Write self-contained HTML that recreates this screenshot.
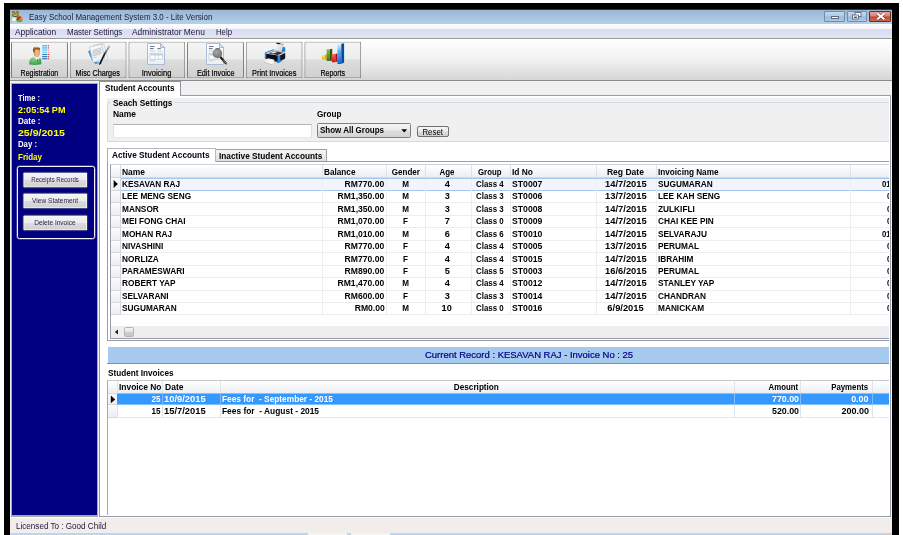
<!DOCTYPE html>
<html><head><meta charset="utf-8"><title>Easy School Management System 3.0 - Lite Version</title>
<style>
html,body{margin:0;padding:0;background:#fff;}
body{width:903px;height:535px;position:relative;overflow:hidden;font-family:"Liberation Sans",sans-serif;}
div,span,svg{position:absolute;display:block;}
span{white-space:nowrap;}
</style></head><body><div id="app" style="left:0;top:0;width:903px;height:535px;will-change:transform">
<div style="left:4px;top:3px;width:895px;height:532px;background:#000;"></div>
<div style="left:10px;top:10px;width:882px;height:525px;background:#f0f0f0;"></div>
<div style="left:10px;top:9px;width:882px;height:15px;background:linear-gradient(#98b4d4,#9fbad9 20%,#b5d0e9);"></div>
<div style="left:10px;top:9px;width:882px;height:1px;background:#2e3640;"></div>
<div style="left:10px;top:24px;width:882px;height:14px;background:linear-gradient(#ffffff,#f3f5fb 35%,#d7dcef 40%,#e2e7f5);"></div>
<div style="left:10px;top:38px;width:882px;height:1px;background:#9a9a9a;"></div>
<div style="left:10px;top:39px;width:882px;height:41px;background:linear-gradient(#ffffff,#f2f2f2 50%,#d6d6d6);"></div>
<div style="left:10px;top:80px;width:882px;height:1px;background:#8c8c8c;"></div>
<svg style="left:11px;top:10px" width="13" height="13" viewBox="11 10 13 13">
<path d="M11.6 16.2 Q11.4 13.6 13.4 13.4 L17.6 13.4 Q19.4 13.6 19.2 16.2 L17.4 17 L13.6 17Z" fill="#5a9e2a"/>
<circle cx="13.5" cy="12.6" r="1.7" fill="#b8844a"/><circle cx="17.4" cy="12.6" r="1.7" fill="#b8844a"/>
<path d="M11.9 12.2 Q13.5 10.2 15.1 12.2Z" fill="#7a4a1a"/><path d="M15.8 12.2 Q17.4 10.2 19 12.2Z" fill="#7a4a1a"/>
<circle cx="15.4" cy="14.6" r="1.6" fill="#d8a878"/><path d="M13.9 14.2 Q15.4 12.4 16.9 14.2Z" fill="#7a4a1a"/>
<path d="M13.8 17 Q15.4 15.6 17 17Z" fill="#2c2c2c"/>
<rect x="12" y="17.2" width="4" height="4.2" fill="#f6f4ee" stroke="#b0aca0" stroke-width=".4"/>
<circle cx="19.5" cy="19.2" r="2.9" fill="#e81c10"/>
<path d="M19.5 19.2 L21.2 16.9 A2.9 2.9 0 0 1 22.3 20Z" fill="#f0a020"/>
<path d="M19.5 19.2 L22.3 20 A2.9 2.9 0 0 1 17 20.7Z" fill="#58c020"/>
</svg>
<span style="left:28.70px;top:10px;width:202.38px;line-height:14px;font-size:8.6px;font-weight:normal;color:#1c1c3a;text-align:left;transform:scaleX(0.925);transform-origin:left center;">Easy School Management System 3.0 - Lite Version</span>
<span style="left:15.20px;top:25px;width:46.07px;line-height:14px;font-size:8.6px;font-weight:normal;color:#28143c;text-align:left;transform:scaleX(0.979);transform-origin:left center;">Application</span>
<span style="left:67.00px;top:25px;width:63.75px;line-height:14px;font-size:8.6px;font-weight:normal;color:#28143c;text-align:left;transform:scaleX(0.926);transform-origin:left center;">Master Settings</span>
<span style="left:132.40px;top:25px;width:78.56px;line-height:14px;font-size:8.6px;font-weight:normal;color:#28143c;text-align:left;transform:scaleX(0.978);transform-origin:left center;">Administrator Menu</span>
<span style="left:216.00px;top:25px;width:21.69px;line-height:14px;font-size:8.6px;font-weight:normal;color:#28143c;text-align:left;transform:scaleX(0.905);transform-origin:left center;">Help</span>
<div style="left:824px;top:11px;width:21px;height:11px;background:linear-gradient(#c4d6ea,#b4cbe4 48%,#9db9d8 52%,#b0c8e2);border:1px solid #6f8db0;border-radius:1px;box-sizing:border-box"></div>
<div style="left:847px;top:11px;width:20px;height:11px;background:linear-gradient(#c4d6ea,#b4cbe4 48%,#9db9d8 52%,#b0c8e2);border:1px solid #6f8db0;border-radius:1px;box-sizing:border-box"></div>
<div style="left:869px;top:11px;width:22px;height:11px;background:linear-gradient(#e9a99a,#d9806c 48%,#c4452b 52%,#cf6a50);border:1px solid #6a2a2a;border-radius:1px;box-sizing:border-box"></div>
<div style="left:831px;top:16px;width:8px;height:3px;background:#fff;border:1px solid #5a6a80;box-sizing:border-box"></div>
<svg style="left:851px;top:12px" width="12" height="8" viewBox="0 0 12 8"><rect x="4" y=".6" width="6" height="4" fill="#fff" stroke="#4a5870" stroke-width=".8"/><rect x="1.5" y="3" width="6" height="4" fill="#fff" stroke="#4a5870" stroke-width=".8"/><rect x="3" y="4.6" width="3" height="1.4" fill="#4a5870"/></svg>
<svg style="left:875px;top:12px" width="12" height="9" viewBox="0 0 12 9"><path d="M2.2 1.4 L9.4 7.2 M9.4 1.4 L2.2 7.2" stroke="#6a3030" stroke-width="3.2"/><path d="M2.2 1.4 L9.4 7.2 M9.4 1.4 L2.2 7.2" stroke="#fff" stroke-width="2.1"/></svg>
<div style="left:11px;top:41px;width:57px;height:37px;transform:translate(0.00px,.4px);box-sizing:border-box;border:1px solid #7c7c7c;border-top-color:#a4a4a4;border-radius:2px;background:linear-gradient(#f5f5f5,#ececec 47%,#dddddd 50%,#d0d0d0)"></div>
<span style="left:14.99px;top:67px;width:48.82px;line-height:13px;font-size:8.4px;font-weight:normal;color:#000;text-align:center;transform:scaleX(0.843);transform-origin:center center;-webkit-text-stroke:.2px #000;">Registration</span>
<div style="left:69px;top:41px;width:57px;height:37px;transform:translate(0.66px,.4px);box-sizing:border-box;border:1px solid #7c7c7c;border-top-color:#a4a4a4;border-radius:2px;background:linear-gradient(#f5f5f5,#ececec 47%,#dddddd 50%,#d0d0d0)"></div>
<span style="left:70.39px;top:67px;width:55.35px;line-height:13px;font-size:8.4px;font-weight:normal;color:#000;text-align:center;transform:scaleX(0.865);transform-origin:center center;-webkit-text-stroke:.2px #000;">Misc Charges</span>
<div style="left:128px;top:41px;width:57px;height:37px;transform:translate(0.32px,.4px);box-sizing:border-box;border:1px solid #7c7c7c;border-top-color:#a4a4a4;border-radius:2px;background:linear-gradient(#f5f5f5,#ececec 47%,#dddddd 50%,#d0d0d0)"></div>
<span style="left:138.14px;top:67px;width:37.15px;line-height:13px;font-size:8.4px;font-weight:normal;color:#000;text-align:center;transform:scaleX(0.899);transform-origin:center center;-webkit-text-stroke:.2px #000;">Invoicing</span>
<div style="left:186px;top:41px;width:57px;height:37px;transform:translate(0.98px,.4px);box-sizing:border-box;border:1px solid #7c7c7c;border-top-color:#a4a4a4;border-radius:2px;background:linear-gradient(#f5f5f5,#ececec 47%,#dddddd 50%,#d0d0d0)"></div>
<span style="left:191.67px;top:67px;width:47.42px;line-height:13px;font-size:8.4px;font-weight:normal;color:#000;text-align:center;transform:scaleX(0.868);transform-origin:center center;-webkit-text-stroke:.2px #000;">Edit Invoice</span>
<div style="left:245px;top:41px;width:57px;height:37px;transform:translate(0.64px,.4px);box-sizing:border-box;border:1px solid #7c7c7c;border-top-color:#a4a4a4;border-radius:2px;background:linear-gradient(#f5f5f5,#ececec 47%,#dddddd 50%,#d0d0d0)"></div>
<span style="left:246.83px;top:67px;width:54.42px;line-height:13px;font-size:8.4px;font-weight:normal;color:#000;text-align:center;transform:scaleX(0.883);transform-origin:center center;-webkit-text-stroke:.2px #000;">Print Invoices</span>
<div style="left:304px;top:41px;width:57px;height:37px;transform:translate(0.30px,.4px);box-sizing:border-box;border:1px solid #7c7c7c;border-top-color:#a4a4a4;border-radius:2px;background:linear-gradient(#f5f5f5,#ececec 47%,#dddddd 50%,#d0d0d0)"></div>
<span style="left:315.99px;top:67px;width:33.41px;line-height:13px;font-size:8.4px;font-weight:normal;color:#000;text-align:center;transform:scaleX(0.833);transform-origin:center center;-webkit-text-stroke:.2px #000;">Reports</span>
<svg style="left:28px;top:43px" width="24" height="23" viewBox="28 43 24 23"><defs><linearGradient id="rgp" x1="0" y1="0" x2="0" y2="1"><stop offset="0" stop-color="#f4faff"/><stop offset="1" stop-color="#d8e9f8"/></linearGradient>
<radialGradient id="rgb" cx=".4" cy=".3" r=".8"><stop offset="0" stop-color="#7fd08a"/><stop offset="1" stop-color="#2f9a48"/></radialGradient>
<linearGradient id="rgs" x1="0" y1="0" x2="1" y2="0"><stop offset="0" stop-color="#c98a4e"/><stop offset=".5" stop-color="#f0bc8a"/><stop offset="1" stop-color="#d79a62"/></linearGradient></defs><rect x="40" y="43.8" width="10.2" height="17.6" fill="url(#rgp)"/><rect x="42.2" y="45.20" width="5.2" height="1.1" fill="#19b4ec"/><rect x="48" y="45.20" width="1.1" height="1.1" fill="#e0303a" opacity="1"/><rect x="42.2" y="47.38" width="5.2" height="1.1" fill="#22b0ea"/><rect x="48" y="47.38" width="1.1" height="1.1" fill="#e0303a" opacity="1"/><rect x="42.2" y="49.56" width="5.2" height="1.1" fill="#5abde9"/><rect x="48" y="49.56" width="1.1" height="1.1" fill="#e0303a" opacity="0.45"/><rect x="42.2" y="51.74" width="5.2" height="1.1" fill="#8cc6ea"/><rect x="48" y="51.74" width="1.1" height="1.1" fill="#e0303a" opacity="0.45"/><rect x="42.2" y="53.92" width="5.2" height="1.1" fill="#2d86bd"/><rect x="48" y="53.92" width="1.1" height="1.1" fill="#e0303a" opacity="1"/><rect x="42.2" y="56.10" width="5.2" height="1.1" fill="#2c6ea8"/><rect x="48" y="56.10" width="1.1" height="1.1" fill="#e0303a" opacity="1"/><rect x="42.2" y="58.28" width="5.2" height="1.1" fill="#365f9a"/><rect x="48" y="58.28" width="1.1" height="1.1" fill="#e0303a" opacity="1"/><path d="M29.2 64.6 Q28.8 58.6 33 57.6 L37.6 56.8 Q41.6 57.6 41.4 62 L41.2 64.2 Q35 65.6 29.2 64.6Z" fill="url(#rgb)"/><path d="M34 57.2 L37.4 60.8 L40 57.4 L38 56.4 L35.6 56.4Z" fill="#f4f4fa"/><path d="M36.8 59 L37.9 59 L37.7 61.4 L37 61.4Z" fill="#d63a28"/><path d="M33.4 50 Q33.2 47.2 36.2 47 Q40 46.8 40 50.4 L39.8 54 Q39.2 57.4 37 57.4 Q34.6 57.2 33.8 54Z" fill="url(#rgs)"/><path d="M33 51.6 Q32.4 47.4 35 46.9 Q38.4 46.2 40.2 48.4 L39.9 50.2 Q37.4 49 35.2 49.8 Q34.4 51 34.2 53Z" fill="#9a5a1c"/><path d="M34.4 47.6 Q36.6 46.4 38.8 47.6 Q36.6 48.6 34.4 47.6Z" fill="#e8b820"/></svg>
<svg style="left:86px;top:42px" width="26" height="24" viewBox="86 42 26 24"><defs><linearGradient id="mcp" x1="0" y1="0" x2="1" y2="1"><stop offset="0" stop-color="#ffffff"/><stop offset="1" stop-color="#e8eaee"/></linearGradient></defs><path d="M88 51.6 L90.4 49.6 L99.6 63 L95.4 64.3 L91.8 60Z" fill="#3a9ce0"/><path d="M93.4 45.4 L103.6 43.3 L107.8 59.2 L97 62.6Z" fill="#f4f5f7" stroke="#b4b8c0" stroke-width=".5"/><path d="M89.6 47.2 L101.6 44 L104.8 58.6 L93 62.8Z" fill="url(#mcp)" stroke="#a4a8b0" stroke-width=".55"/><path d="M92.4 50.3 L101.4 47.9" stroke="#a9acb2" stroke-width=".75" opacity=".85"/><path d="M92.4 51.8 L101.4 49.4" stroke="#a9acb2" stroke-width=".75" opacity=".85"/><path d="M92.4 53.2 L101.4 50.8" stroke="#a9acb2" stroke-width=".75" opacity=".85"/><path d="M92.4 54.6 L101.4 52.2" stroke="#a9acb2" stroke-width=".75" opacity=".85"/><path d="M92.4 56.1 L101.4 53.7" stroke="#a9acb2" stroke-width=".75" opacity=".85"/><path d="M93.8 57.8 L96.4 57.1" stroke="#a9acb2" stroke-width=".6"/><path d="M106 51.4 Q103 57 100.2 63.4" stroke="#14181c" stroke-width="1.7" stroke-linecap="round" fill="none"/><path d="M109 46.6 L106.2 51.6" stroke="#8e9298" stroke-width="1.9" stroke-linecap="round"/><path d="M108.4 46.2 L107.6 47.6" stroke="#c8ccd0" stroke-width="1.2" stroke-linecap="round"/><path d="M106.6 51.2 L105 54.2" stroke="#3a8ed0" stroke-width=".9" /><path d="M100.4 63 L99.6 64.4" stroke="#000" stroke-width=".9" stroke-linecap="round"/></svg>
<svg style="left:146px;top:42px" width="21" height="24" viewBox="146 42 21 24"><defs><linearGradient id="ivg" x1="0" y1="0" x2="0" y2="1"><stop offset="0" stop-color="#ffffff"/><stop offset="1" stop-color="#eceef2"/></linearGradient></defs><path d="M147.5 43.5 L160.5 43.5 L164.5 47.5 L164.5 64.5 L147.5 64.5Z" fill="url(#ivg)" stroke="#a9bdd8" stroke-width="1"/><path d="M160.5 43.5 L160.5 47.5 L164.5 47.5Z" fill="#dfe8f4" stroke="#8aa2c4" stroke-width=".7"/><rect x="150" y="46" width="4.6" height=".9" fill="#5a6f98"/><rect x="150" y="48.2" width="3.6" height=".9" fill="#555b66"/><rect x="157.4" y="48.2" width="3.4" height=".9" fill="#555b66"/><rect x="150" y="50.6" width="4.8" height="1.1" fill="#c2d3e8"/><rect x="157.4" y="50.6" width="4.8" height="1.1" fill="#c2d3e8"/><rect x="150" y="53.4" width="12.6" height="5.8" fill="#fff" stroke="#a9bdd8" stroke-width=".6"/><rect x="150.3" y="53.7" width="12" height="1.9" fill="#c6d6ea"/><path d="M155.2 53.4 V59.2 M158.6 53.4 V59.2" stroke="#b4c6de" stroke-width=".6"/><rect x="150" y="60.2" width="4.8" height="1.1" fill="#c2d3e8"/></svg>
<svg style="left:205px;top:42px" width="24" height="24" viewBox="205 42 24 24"><defs><linearGradient id="eig" x1="0" y1="0" x2="0" y2="1"><stop offset="0" stop-color="#ffffff"/><stop offset="1" stop-color="#eceef2"/></linearGradient><radialGradient id="eim" cx=".4" cy=".35" r=".75"><stop offset="0" stop-color="#a8a8a8"/><stop offset="1" stop-color="#6a6a6a"/></radialGradient></defs><path d="M206.5 43.5 L219.5 43.5 L223.5 47.5 L223.5 64.5 L206.5 64.5Z" fill="url(#eig)" stroke="#a9bdd8" stroke-width="1"/><path d="M219.5 43.5 L219.5 47.5 L223.5 47.5Z" fill="#dfe8f4" stroke="#8aa2c4" stroke-width=".7"/><rect x="209" y="46" width="4.6" height=".9" fill="#5a6f98"/><rect x="209" y="48.2" width="3.6" height=".9" fill="#555b66"/><rect x="216.4" y="48.2" width="3.4" height=".9" fill="#555b66"/><rect x="209" y="50.6" width="4.8" height="1.1" fill="#c2d3e8"/><rect x="216.4" y="50.6" width="4.8" height="1.1" fill="#c2d3e8"/><rect x="209" y="53.4" width="12.6" height="5.8" fill="#fff" stroke="#a9bdd8" stroke-width=".6"/><rect x="209.3" y="53.7" width="12" height="1.9" fill="#c6d6ea"/><path d="M214.2 53.4 V59.2 M217.6 53.4 V59.2" stroke="#b4c6de" stroke-width=".6"/><rect x="209" y="60.2" width="4.8" height="1.1" fill="#c2d3e8"/><path d="M220.6 57.2 L226 63.4" stroke="#1c1c1c" stroke-width="2.2" stroke-linecap="round"/><path d="M223.6 60.2 L226.4 63.4" stroke="#9a9a9a" stroke-width="1" stroke-linecap="round"/><circle cx="217.4" cy="53.4" r="4.8" fill="url(#eim)"/><path d="M215.4 49.4 Q217.4 47.8 219.4 49.2" stroke="#7a7a7a" stroke-width="1.2" fill="none"/></svg>
<svg style="left:262px;top:41px" width="26" height="25" viewBox="262 41 26 25"><defs><linearGradient id="prp" x1="0" y1="0" x2="1" y2="1"><stop offset="0" stop-color="#ffffff"/><stop offset="1" stop-color="#c0c4c8"/></linearGradient>
<linearGradient id="prq" x1="0" y1="0" x2="0" y2="1"><stop offset="0" stop-color="#e8eaec"/><stop offset="1" stop-color="#ffffff"/></linearGradient></defs><path d="M282.2 46.6 L285.2 47.6 L285.3 51.4 L281.4 52.4Z" fill="#1f7ee0"/><path d="M276.4 43.2 L283.6 44.4 L281.3 52.4 L274.9 50.2Z" fill="url(#prp)"/><path d="M276.4 43.3 L280.4 43.7" stroke="#1c1c1c" stroke-width="1.2" fill="none"/><path d="M280.4 43.8 L283.8 44.5" stroke="#8a8e94" stroke-width=".7" fill="none"/><path d="M265 52.9 L274 49.6 L285 52.5 L278 55.6Z" fill="#c9cdd2"/><path d="M265 52.8 L273.9 49.6" stroke="#2a86e6" stroke-width="1" fill="none"/><path d="M268.4 53.2 L275 50.9 L283 52.7 L277.8 54.9Z" fill="#2e3238"/><path d="M270.6 52.8 L275 51.3 L277.6 51.9 L273.2 53.6Z" fill="#eceef0"/><path d="M265.2 53.6 L278 55.6 L278 62.2 L265.2 58.5Z" fill="#0c0e12"/><path d="M279.8 55.4 L285.2 52.8 L285.2 58.6 L279.8 61.6Z" fill="#15171c"/><path d="M264.8 53 L266.3 53.5 L266.4 59 L264.8 58.5Z" fill="#2a7ee0"/><path d="M277.5 55.5 L280.2 55.3 L280.3 62 L277.6 62.6 Z" fill="#3b82e6"/><path d="M276 61 L281.4 59.8 L281.6 61.6 L277.6 63.2Z" fill="#1f7ee0"/><path d="M268 58.3 L274.7 59.7 L272 64.4 L264.1 61.8Z" fill="url(#prq)"/><path d="M264.4 62.2 L271.8 64.5" stroke="#8a8e94" stroke-width=".6" stroke-dasharray="1.2 1"/></svg>
<svg style="left:320px;top:42px" width="26" height="24" viewBox="320 42 26 24"><defs><linearGradient id="rpy" x1="0" y1="0" x2="0" y2="1"><stop offset="0" stop-color="#ffe860"/><stop offset="1" stop-color="#f0b400"/></linearGradient>
<linearGradient id="rpg" x1="0" y1="0" x2="0" y2="1"><stop offset="0" stop-color="#8cc040"/><stop offset="1" stop-color="#3c7818"/></linearGradient>
<linearGradient id="rpr" x1="0" y1="0" x2="0" y2="1"><stop offset="0" stop-color="#ff6a5a"/><stop offset="1" stop-color="#d81010"/></linearGradient>
<linearGradient id="rpb" x1="0" y1="0" x2="0" y2="1"><stop offset="0" stop-color="#e4f2ff"/><stop offset=".4" stop-color="#58a8f0"/><stop offset="1" stop-color="#0a62d8"/></linearGradient></defs><rect x="321.8" y="55" width="3.6" height="4.6" rx=".8" fill="url(#rpy)"/><rect x="325.2" y="54.6" width="1.4" height="4.8" fill="#d89a00"/><rect x="326.6" y="49.2" width="3.4" height="11.8" rx=".5" fill="url(#rpg)"/><path d="M330 49.2 L332.2 48.8 L332.2 60 L330 61Z" fill="#2c5410"/><rect x="331.6" y="54" width="3.8" height="8.2" rx=".6" fill="url(#rpr)"/><path d="M335.4 54 L337.4 53.4 L337.4 61.4 L335.4 62.2Z" fill="#a80c0c"/><rect x="337.4" y="43.8" width="3.9" height="20.2" rx=".5" fill="url(#rpb)"/><path d="M341.3 43.8 L344.1 43.3 L344.1 62.6 L341.3 64Z" fill="#0c4a94"/></svg>
<div style="left:10px;top:82px;width:88px;height:435px;background:#f0f0f0;"></div>
<div style="left:11px;top:83px;width:87px;height:434px;background:#a8a8a8;"></div>
<div style="left:12px;top:84px;width:85px;height:431px;background:#000080;"></div>
<span style="left:18.00px;top:91px;width:30.34px;line-height:14px;font-size:9.0px;font-weight:bold;color:#fff;text-align:left;transform:scaleX(0.835);transform-origin:left center;">Time :</span>
<span style="left:18.00px;top:102px;width:54.16px;line-height:15px;font-size:9.6px;font-weight:bold;color:#ffff00;text-align:left;transform:scaleX(0.947);transform-origin:left center;">2:05:54 PM</span>
<span style="left:18.00px;top:114px;width:29.01px;line-height:14px;font-size:9.0px;font-weight:bold;color:#fff;text-align:left;transform:scaleX(0.900);transform-origin:left center;">Date :</span>
<span style="left:18.00px;top:125px;width:46.71px;line-height:15px;font-size:9.6px;font-weight:bold;color:#ffff00;text-align:left;transform:scaleX(1.100);transform-origin:left center;">25/9/2015</span>
<span style="left:18.00px;top:137px;width:26.01px;line-height:14px;font-size:9.0px;font-weight:bold;color:#fff;text-align:left;transform:scaleX(0.863);transform-origin:left center;">Day :</span>
<span style="left:18.00px;top:149px;width:32.81px;line-height:15px;font-size:9.6px;font-weight:bold;color:#ffff00;text-align:left;transform:scaleX(0.833);transform-origin:left center;">Friday</span>
<div style="left:17px;top:166px;width:78px;height:73px;box-sizing:border-box;border:1px solid #f4f4fa;border-radius:2.5px;box-shadow:0 0 0 .5px rgba(255,255,255,.45)"></div>
<div style="left:22px;top:171px;width:66px;height:17px;transform:translate(.3px,0.50px);box-sizing:border-box;border:1px solid #20206c;border-radius:2px;background:linear-gradient(#f6f6f6,#ececec 48%,#dcdcdc 52%,#cfcfcf);box-shadow:inset 0 0 0 1px #fbfbfb"></div>
<span style="left:27.26px;top:174px;width:56.09px;line-height:11px;font-size:6.6px;font-weight:normal;color:#2a2050;text-align:center;transform:scaleX(0.912);transform-origin:center center;">Receipts Records</span>
<div style="left:22px;top:192px;width:66px;height:17px;transform:translate(.3px,0.40px);box-sizing:border-box;border:1px solid #20206c;border-radius:2px;background:linear-gradient(#f6f6f6,#ececec 48%,#dcdcdc 52%,#cfcfcf);box-shadow:inset 0 0 0 1px #fbfbfb"></div>
<span style="left:30.25px;top:195px;width:50.10px;line-height:11px;font-size:6.6px;font-weight:normal;color:#2a2050;text-align:center;transform:scaleX(0.998);transform-origin:center center;">View Statement</span>
<div style="left:22px;top:214px;width:66px;height:17px;transform:translate(.3px,0.40px);box-sizing:border-box;border:1px solid #20206c;border-radius:2px;background:linear-gradient(#f6f6f6,#ececec 48%,#dcdcdc 52%,#cfcfcf);box-shadow:inset 0 0 0 1px #fbfbfb"></div>
<span style="left:32.39px;top:217px;width:45.82px;line-height:11px;font-size:6.6px;font-weight:normal;color:#2a2050;text-align:center;transform:scaleX(0.992);transform-origin:center center;">Delete Invoice</span>
<div style="left:100px;top:96px;width:790px;height:421px;background:#fff;"></div>
<div style="left:99px;top:95px;width:792px;height:1px;background:#989ca8;"></div>
<div style="left:99px;top:95px;width:1px;height:422px;background:#989ca8;"></div>
<div style="left:890px;top:95px;width:1px;height:422px;background:#989ca8;"></div>
<div style="left:99px;top:516px;width:792px;height:1px;background:#989ca8;"></div>
<div style="left:891px;top:81px;width:1px;height:436px;background:#f6f6f6;"></div>
<div style="left:98px;top:81px;width:1px;height:436px;background:#f6f6f6;"></div>
<div style="left:99px;top:81px;width:82px;height:15px;background:#fff;box-sizing:border-box;border:1px solid #8e93a2;border-bottom:none"></div>
<span style="left:104.70px;top:81px;width:76.41px;line-height:14px;font-size:8.5px;font-weight:bold;color:#000;text-align:left;transform:scaleX(0.960);transform-origin:left center;">Student Accounts</span>
<div style="left:107px;top:98px;width:782px;height:44px;background:#f0f0f0;"></div>
<div style="left:107px;top:102px;width:782px;height:40px;box-sizing:border-box;border:1px solid #d0dbe3;border-right:none;border-radius:2px 0 0 2px"></div>
<div style="left:111px;top:98px;width:63px;height:9px;background:#f0f0f0;"></div>
<span style="left:113.00px;top:96px;width:64.94px;line-height:14px;font-size:8.5px;font-weight:bold;color:#000;text-align:left;transform:scaleX(0.976);transform-origin:left center;">Seach Settings</span>
<span style="left:113.00px;top:107px;width:27.15px;line-height:14px;font-size:8.5px;font-weight:bold;color:#000;text-align:left;transform:scaleX(0.993);transform-origin:left center;">Name</span>
<span style="left:317.30px;top:107px;width:29.50px;line-height:14px;font-size:8.5px;font-weight:bold;color:#000;text-align:left;transform:scaleX(0.961);transform-origin:left center;">Group</span>
<div style="left:113px;top:124px;width:199px;height:14px;background:#fff;box-sizing:border-box;border:1px solid #dcdfe5;border-top-color:#b0b4bc;border-bottom-color:#e4e7ec"></div>
<div style="left:317px;top:123px;width:94px;height:15px;box-sizing:border-box;border:1px solid #808080;border-radius:1.5px;background:linear-gradient(#f4f4f4,#ebebeb 48%,#dddddd 52%,#d3d3d3)"></div>
<span style="left:320.00px;top:123px;width:72.16px;line-height:14px;font-size:8.5px;font-weight:bold;color:#000;text-align:left;transform:scaleX(0.939);transform-origin:left center;">Show All Groups</span>
<svg style="left:401px;top:129px" width="7" height="4" viewBox="0 0 7 4"><path d="M0.3 0.2 L6.2 0.2 L3.25 3.6Z" fill="#000"/></svg>
<div style="left:417px;top:126px;width:32px;height:11px;box-sizing:border-box;border:1px solid #707070;border-radius:2px;background:linear-gradient(#f6f6f6,#ececec 48%,#dcdcdc 52%,#d0d0d0)"></div>
<span style="left:420.49px;top:126px;width:25.42px;line-height:13px;font-size:8.2px;font-weight:normal;color:#000;text-align:center;transform:scaleX(0.957);transform-origin:center center;">Reset</span>
<div style="left:107px;top:161px;width:782px;height:1px;background:#989ca8;"></div>
<div style="left:107px;top:161px;width:1px;height:180px;background:#989ca8;"></div>
<div style="left:107px;top:340px;width:782px;height:1px;background:#989ca8;"></div>
<div style="left:107px;top:148px;width:109px;height:14px;background:#fff;box-sizing:border-box;border:1px solid #a8acb8;border-top-color:#b4b8c2;border-right-color:#b8bcc6;border-bottom:none"></div>
<div style="left:216px;top:149px;width:111px;height:12px;background:linear-gradient(#f4f4f4,#ebebeb 50%,#dedede);box-sizing:border-box;border:1px solid #9aa0b0;border-bottom:none;border-left:none"></div>
<span style="left:112.20px;top:148px;width:104.29px;line-height:14px;font-size:8.5px;font-weight:bold;color:#000;text-align:left;transform:scaleX(0.972);transform-origin:left center;">Active Student Accounts</span>
<span style="left:219.00px;top:149px;width:110.43px;line-height:14px;font-size:8.5px;font-weight:bold;color:#000;text-align:left;transform:scaleX(0.972);transform-origin:left center;">Inactive Student Accounts</span>
<div style="left:110px;top:164px;width:780px;height:175px;background:#fff;box-sizing:border-box;border:1px solid #9a9ea8;border-top-color:#cdd1d8"></div>
<div style="left:111px;top:165px;width:779px;height:12px;background:linear-gradient(#ffffff,#f6f7f9 50%,#eceef2);"></div>
<div style="left:111px;top:177px;width:779px;height:1px;background:#d5d8de;"></div>
<div style="left:120px;top:165px;width:1px;height:12px;background:#dfe2e8;"></div>
<div style="left:322px;top:165px;width:1px;height:12px;background:#dfe2e8;"></div>
<div style="left:386px;top:165px;width:1px;height:12px;background:#dfe2e8;"></div>
<div style="left:425px;top:165px;width:1px;height:12px;background:#dfe2e8;"></div>
<div style="left:471px;top:165px;width:1px;height:12px;background:#dfe2e8;"></div>
<div style="left:510px;top:165px;width:1px;height:12px;background:#dfe2e8;"></div>
<div style="left:596px;top:165px;width:1px;height:12px;background:#dfe2e8;"></div>
<div style="left:656px;top:165px;width:1px;height:12px;background:#dfe2e8;"></div>
<div style="left:850px;top:165px;width:1px;height:12px;background:#dfe2e8;"></div>
<span style="left:122.20px;top:165px;width:27.15px;line-height:14px;font-size:8.5px;font-weight:bold;color:#000;text-align:left;transform:scaleX(0.993);transform-origin:left center;">Name</span>
<span style="left:323.50px;top:165px;width:36.60px;line-height:14px;font-size:8.5px;font-weight:bold;color:#000;text-align:left;transform:scaleX(0.966);transform-origin:left center;">Balance</span>
<span style="left:388.92px;top:165px;width:33.76px;line-height:14px;font-size:8.5px;font-weight:bold;color:#000;text-align:center;transform:scaleX(0.941);transform-origin:center center;">Gender</span>
<span style="left:436.97px;top:165px;width:20.06px;line-height:14px;font-size:8.5px;font-weight:bold;color:#000;text-align:center;transform:scaleX(0.934);transform-origin:center center;">Age</span>
<span style="left:475.25px;top:165px;width:29.50px;line-height:14px;font-size:8.5px;font-weight:bold;color:#000;text-align:center;transform:scaleX(0.922);transform-origin:center center;">Group</span>
<span style="left:511.50px;top:165px;width:25.25px;line-height:14px;font-size:8.5px;font-weight:bold;color:#000;text-align:left;transform:scaleX(0.988);transform-origin:left center;">Id No</span>
<span style="left:605.38px;top:165px;width:40.84px;line-height:14px;font-size:8.5px;font-weight:bold;color:#000;text-align:center;transform:scaleX(1.004);transform-origin:center center;">Reg Date</span>
<span style="left:657.80px;top:165px;width:66.82px;line-height:14px;font-size:8.5px;font-weight:bold;color:#000;text-align:left;transform:scaleX(0.963);transform-origin:left center;">Invoicing Name</span>
<div style="left:120px;top:190px;width:770px;height:1px;background:#a9c7ee;"></div>
<div style="left:111px;top:179px;width:9px;height:11px;background:linear-gradient(#fbfbfc,#eceef1);"></div>
<div style="left:111px;top:190px;width:9px;height:1px;background:#d5d8de;"></div>
<div style="left:120px;top:179px;width:770px;height:11px;background:#f2f6fc;"></div>
<div style="left:120px;top:178px;width:770px;height:1px;background:#a9c7ee;"></div>
<span style="left:122.00px;top:177px;width:63.67px;line-height:14px;font-size:8.5px;font-weight:bold;color:#000;text-align:left;transform:scaleX(0.975);transform-origin:left center;">KESAVAN RAJ</span>
<span style="left:341.08px;top:177px;width:43.22px;line-height:14px;font-size:8.5px;font-weight:bold;color:#000;text-align:right;transform:scaleX(1.010);transform-origin:right center;">RM770.00</span>
<span style="left:400.06px;top:177px;width:11.08px;line-height:14px;font-size:8.5px;font-weight:bold;color:#000;text-align:center;transform:scaleX(0.950);transform-origin:center center;">M</span>
<span style="left:442.64px;top:177px;width:8.73px;line-height:14px;font-size:8.5px;font-weight:bold;color:#000;text-align:center;transform:scaleX(1.080);transform-origin:center center;">4</span>
<span style="left:470.43px;top:177px;width:33.77px;line-height:14px;font-size:8.5px;font-weight:bold;color:#000;text-align:right;transform:scaleX(0.930);transform-origin:right center;">Class 4</span>
<span style="left:512.00px;top:177px;width:33.77px;line-height:14px;font-size:8.5px;font-weight:bold;color:#000;text-align:left;transform:scaleX(1.020);transform-origin:left center;">ST0007</span>
<span style="left:605.09px;top:177px;width:41.82px;line-height:14px;font-size:8.5px;font-weight:bold;color:#000;text-align:center;transform:scaleX(1.100);transform-origin:center center;">14/7/2015</span>
<span style="left:658.00px;top:177px;width:60.19px;line-height:14px;font-size:8.5px;font-weight:bold;color:#000;text-align:left;transform:scaleX(0.975);transform-origin:left center;">SUGUMARAN</span>
<div style="left:120px;top:202px;width:770px;height:1px;background:#eaecef;"></div>
<div style="left:111px;top:191px;width:9px;height:11px;background:linear-gradient(#fbfbfc,#eceef1);"></div>
<div style="left:111px;top:202px;width:9px;height:1px;background:#d5d8de;"></div>
<span style="left:122.00px;top:189px;width:74.84px;line-height:14px;font-size:8.5px;font-weight:bold;color:#000;text-align:left;transform:scaleX(0.975);transform-origin:left center;">LEE MENG SENG</span>
<span style="left:333.99px;top:189px;width:50.31px;line-height:14px;font-size:8.5px;font-weight:bold;color:#000;text-align:right;transform:scaleX(1.010);transform-origin:right center;">RM1,350.00</span>
<span style="left:400.06px;top:189px;width:11.08px;line-height:14px;font-size:8.5px;font-weight:bold;color:#000;text-align:center;transform:scaleX(0.950);transform-origin:center center;">M</span>
<span style="left:442.64px;top:189px;width:8.73px;line-height:14px;font-size:8.5px;font-weight:bold;color:#000;text-align:center;transform:scaleX(1.080);transform-origin:center center;">3</span>
<span style="left:470.43px;top:189px;width:33.77px;line-height:14px;font-size:8.5px;font-weight:bold;color:#000;text-align:right;transform:scaleX(0.930);transform-origin:right center;">Class 3</span>
<span style="left:512.00px;top:189px;width:33.77px;line-height:14px;font-size:8.5px;font-weight:bold;color:#000;text-align:left;transform:scaleX(1.020);transform-origin:left center;">ST0006</span>
<span style="left:605.09px;top:189px;width:41.82px;line-height:14px;font-size:8.5px;font-weight:bold;color:#000;text-align:center;transform:scaleX(1.100);transform-origin:center center;">13/7/2015</span>
<span style="left:658.00px;top:189px;width:67.76px;line-height:14px;font-size:8.5px;font-weight:bold;color:#000;text-align:left;transform:scaleX(0.975);transform-origin:left center;">LEE KAH SENG</span>
<div style="left:120px;top:215px;width:770px;height:1px;background:#eaecef;"></div>
<div style="left:111px;top:203px;width:9px;height:12px;background:linear-gradient(#fbfbfc,#eceef1);"></div>
<div style="left:111px;top:215px;width:9px;height:1px;background:#d5d8de;"></div>
<span style="left:122.00px;top:202px;width:41.78px;line-height:14px;font-size:8.5px;font-weight:bold;color:#000;text-align:left;transform:scaleX(0.975);transform-origin:left center;">MANSOR</span>
<span style="left:333.99px;top:202px;width:50.31px;line-height:14px;font-size:8.5px;font-weight:bold;color:#000;text-align:right;transform:scaleX(1.010);transform-origin:right center;">RM1,350.00</span>
<span style="left:400.06px;top:202px;width:11.08px;line-height:14px;font-size:8.5px;font-weight:bold;color:#000;text-align:center;transform:scaleX(0.950);transform-origin:center center;">M</span>
<span style="left:442.64px;top:202px;width:8.73px;line-height:14px;font-size:8.5px;font-weight:bold;color:#000;text-align:center;transform:scaleX(1.080);transform-origin:center center;">3</span>
<span style="left:470.43px;top:202px;width:33.77px;line-height:14px;font-size:8.5px;font-weight:bold;color:#000;text-align:right;transform:scaleX(0.930);transform-origin:right center;">Class 3</span>
<span style="left:512.00px;top:202px;width:33.77px;line-height:14px;font-size:8.5px;font-weight:bold;color:#000;text-align:left;transform:scaleX(1.020);transform-origin:left center;">ST0008</span>
<span style="left:605.09px;top:202px;width:41.82px;line-height:14px;font-size:8.5px;font-weight:bold;color:#000;text-align:center;transform:scaleX(1.100);transform-origin:center center;">14/7/2015</span>
<span style="left:658.00px;top:202px;width:41.77px;line-height:14px;font-size:8.5px;font-weight:bold;color:#000;text-align:left;transform:scaleX(0.975);transform-origin:left center;">ZULKIFLI</span>
<div style="left:120px;top:227px;width:770px;height:1px;background:#eaecef;"></div>
<div style="left:111px;top:216px;width:9px;height:11px;background:linear-gradient(#fbfbfc,#eceef1);"></div>
<div style="left:111px;top:227px;width:9px;height:1px;background:#d5d8de;"></div>
<span style="left:122.00px;top:214px;width:69.17px;line-height:14px;font-size:8.5px;font-weight:bold;color:#000;text-align:left;transform:scaleX(0.975);transform-origin:left center;">MEI FONG CHAI</span>
<span style="left:333.99px;top:214px;width:50.31px;line-height:14px;font-size:8.5px;font-weight:bold;color:#000;text-align:right;transform:scaleX(1.010);transform-origin:right center;">RM1,070.00</span>
<span style="left:401.00px;top:214px;width:9.19px;line-height:14px;font-size:8.5px;font-weight:bold;color:#000;text-align:center;transform:scaleX(0.950);transform-origin:center center;">F</span>
<span style="left:442.64px;top:214px;width:8.73px;line-height:14px;font-size:8.5px;font-weight:bold;color:#000;text-align:center;transform:scaleX(1.080);transform-origin:center center;">7</span>
<span style="left:470.43px;top:214px;width:33.77px;line-height:14px;font-size:8.5px;font-weight:bold;color:#000;text-align:right;transform:scaleX(0.930);transform-origin:right center;">Class 0</span>
<span style="left:512.00px;top:214px;width:33.77px;line-height:14px;font-size:8.5px;font-weight:bold;color:#000;text-align:left;transform:scaleX(1.020);transform-origin:left center;">ST0009</span>
<span style="left:605.09px;top:214px;width:41.82px;line-height:14px;font-size:8.5px;font-weight:bold;color:#000;text-align:center;transform:scaleX(1.100);transform-origin:center center;">14/7/2015</span>
<span style="left:658.00px;top:214px;width:61.15px;line-height:14px;font-size:8.5px;font-weight:bold;color:#000;text-align:left;transform:scaleX(0.975);transform-origin:left center;">CHAI KEE PIN</span>
<div style="left:120px;top:240px;width:770px;height:1px;background:#eaecef;"></div>
<div style="left:111px;top:228px;width:9px;height:12px;background:linear-gradient(#fbfbfc,#eceef1);"></div>
<div style="left:111px;top:240px;width:9px;height:1px;background:#d5d8de;"></div>
<span style="left:122.00px;top:227px;width:55.47px;line-height:14px;font-size:8.5px;font-weight:bold;color:#000;text-align:left;transform:scaleX(0.975);transform-origin:left center;">MOHAN RAJ</span>
<span style="left:333.99px;top:227px;width:50.31px;line-height:14px;font-size:8.5px;font-weight:bold;color:#000;text-align:right;transform:scaleX(1.010);transform-origin:right center;">RM1,010.00</span>
<span style="left:400.06px;top:227px;width:11.08px;line-height:14px;font-size:8.5px;font-weight:bold;color:#000;text-align:center;transform:scaleX(0.950);transform-origin:center center;">M</span>
<span style="left:442.64px;top:227px;width:8.73px;line-height:14px;font-size:8.5px;font-weight:bold;color:#000;text-align:center;transform:scaleX(1.080);transform-origin:center center;">6</span>
<span style="left:470.43px;top:227px;width:33.77px;line-height:14px;font-size:8.5px;font-weight:bold;color:#000;text-align:right;transform:scaleX(0.930);transform-origin:right center;">Class 6</span>
<span style="left:512.00px;top:227px;width:33.77px;line-height:14px;font-size:8.5px;font-weight:bold;color:#000;text-align:left;transform:scaleX(1.020);transform-origin:left center;">ST0010</span>
<span style="left:605.09px;top:227px;width:41.82px;line-height:14px;font-size:8.5px;font-weight:bold;color:#000;text-align:center;transform:scaleX(1.100);transform-origin:center center;">14/7/2015</span>
<span style="left:658.00px;top:227px;width:54.22px;line-height:14px;font-size:8.5px;font-weight:bold;color:#000;text-align:left;transform:scaleX(0.975);transform-origin:left center;">SELVARAJU</span>
<div style="left:120px;top:252px;width:770px;height:1px;background:#eaecef;"></div>
<div style="left:111px;top:241px;width:9px;height:11px;background:linear-gradient(#fbfbfc,#eceef1);"></div>
<div style="left:111px;top:252px;width:9px;height:1px;background:#d5d8de;"></div>
<span style="left:122.00px;top:239px;width:46.35px;line-height:14px;font-size:8.5px;font-weight:bold;color:#000;text-align:left;transform:scaleX(0.975);transform-origin:left center;">NIVASHINI</span>
<span style="left:341.08px;top:239px;width:43.22px;line-height:14px;font-size:8.5px;font-weight:bold;color:#000;text-align:right;transform:scaleX(1.010);transform-origin:right center;">RM770.00</span>
<span style="left:401.00px;top:239px;width:9.19px;line-height:14px;font-size:8.5px;font-weight:bold;color:#000;text-align:center;transform:scaleX(0.950);transform-origin:center center;">F</span>
<span style="left:442.64px;top:239px;width:8.73px;line-height:14px;font-size:8.5px;font-weight:bold;color:#000;text-align:center;transform:scaleX(1.080);transform-origin:center center;">4</span>
<span style="left:470.43px;top:239px;width:33.77px;line-height:14px;font-size:8.5px;font-weight:bold;color:#000;text-align:right;transform:scaleX(0.930);transform-origin:right center;">Class 4</span>
<span style="left:512.00px;top:239px;width:33.77px;line-height:14px;font-size:8.5px;font-weight:bold;color:#000;text-align:left;transform:scaleX(1.020);transform-origin:left center;">ST0005</span>
<span style="left:605.09px;top:239px;width:41.82px;line-height:14px;font-size:8.5px;font-weight:bold;color:#000;text-align:center;transform:scaleX(1.100);transform-origin:center center;">13/7/2015</span>
<span style="left:658.00px;top:239px;width:46.03px;line-height:14px;font-size:8.5px;font-weight:bold;color:#000;text-align:left;transform:scaleX(0.975);transform-origin:left center;">PERUMAL</span>
<div style="left:120px;top:265px;width:770px;height:1px;background:#eaecef;"></div>
<div style="left:111px;top:253px;width:9px;height:12px;background:linear-gradient(#fbfbfc,#eceef1);"></div>
<div style="left:111px;top:265px;width:9px;height:1px;background:#d5d8de;"></div>
<span style="left:122.00px;top:252px;width:41.77px;line-height:14px;font-size:8.5px;font-weight:bold;color:#000;text-align:left;transform:scaleX(0.975);transform-origin:left center;">NORLIZA</span>
<span style="left:341.08px;top:252px;width:43.22px;line-height:14px;font-size:8.5px;font-weight:bold;color:#000;text-align:right;transform:scaleX(1.010);transform-origin:right center;">RM770.00</span>
<span style="left:401.00px;top:252px;width:9.19px;line-height:14px;font-size:8.5px;font-weight:bold;color:#000;text-align:center;transform:scaleX(0.950);transform-origin:center center;">F</span>
<span style="left:442.64px;top:252px;width:8.73px;line-height:14px;font-size:8.5px;font-weight:bold;color:#000;text-align:center;transform:scaleX(1.080);transform-origin:center center;">4</span>
<span style="left:470.43px;top:252px;width:33.77px;line-height:14px;font-size:8.5px;font-weight:bold;color:#000;text-align:right;transform:scaleX(0.930);transform-origin:right center;">Class 4</span>
<span style="left:512.00px;top:252px;width:33.77px;line-height:14px;font-size:8.5px;font-weight:bold;color:#000;text-align:left;transform:scaleX(1.020);transform-origin:left center;">ST0015</span>
<span style="left:605.09px;top:252px;width:41.82px;line-height:14px;font-size:8.5px;font-weight:bold;color:#000;text-align:center;transform:scaleX(1.100);transform-origin:center center;">14/7/2015</span>
<span style="left:658.00px;top:252px;width:40.36px;line-height:14px;font-size:8.5px;font-weight:bold;color:#000;text-align:left;transform:scaleX(0.975);transform-origin:left center;">IBRAHIM</span>
<div style="left:120px;top:277px;width:770px;height:1px;background:#eaecef;"></div>
<div style="left:111px;top:266px;width:9px;height:11px;background:linear-gradient(#fbfbfc,#eceef1);"></div>
<div style="left:111px;top:277px;width:9px;height:1px;background:#d5d8de;"></div>
<span style="left:122.00px;top:264px;width:68.07px;line-height:14px;font-size:8.5px;font-weight:bold;color:#000;text-align:left;transform:scaleX(0.975);transform-origin:left center;">PARAMESWARI</span>
<span style="left:341.08px;top:264px;width:43.22px;line-height:14px;font-size:8.5px;font-weight:bold;color:#000;text-align:right;transform:scaleX(1.010);transform-origin:right center;">RM890.00</span>
<span style="left:401.00px;top:264px;width:9.19px;line-height:14px;font-size:8.5px;font-weight:bold;color:#000;text-align:center;transform:scaleX(0.950);transform-origin:center center;">F</span>
<span style="left:442.64px;top:264px;width:8.73px;line-height:14px;font-size:8.5px;font-weight:bold;color:#000;text-align:center;transform:scaleX(1.080);transform-origin:center center;">5</span>
<span style="left:470.43px;top:264px;width:33.77px;line-height:14px;font-size:8.5px;font-weight:bold;color:#000;text-align:right;transform:scaleX(0.930);transform-origin:right center;">Class 5</span>
<span style="left:512.00px;top:264px;width:33.77px;line-height:14px;font-size:8.5px;font-weight:bold;color:#000;text-align:left;transform:scaleX(1.020);transform-origin:left center;">ST0003</span>
<span style="left:605.09px;top:264px;width:41.82px;line-height:14px;font-size:8.5px;font-weight:bold;color:#000;text-align:center;transform:scaleX(1.100);transform-origin:center center;">16/6/2015</span>
<span style="left:658.00px;top:264px;width:46.03px;line-height:14px;font-size:8.5px;font-weight:bold;color:#000;text-align:left;transform:scaleX(0.975);transform-origin:left center;">PERUMAL</span>
<div style="left:120px;top:290px;width:770px;height:1px;background:#eaecef;"></div>
<div style="left:111px;top:278px;width:9px;height:12px;background:linear-gradient(#fbfbfc,#eceef1);"></div>
<div style="left:111px;top:290px;width:9px;height:1px;background:#d5d8de;"></div>
<span style="left:122.00px;top:276px;width:58.80px;line-height:14px;font-size:8.5px;font-weight:bold;color:#000;text-align:left;transform:scaleX(0.975);transform-origin:left center;">ROBERT YAP</span>
<span style="left:333.99px;top:276px;width:50.31px;line-height:14px;font-size:8.5px;font-weight:bold;color:#000;text-align:right;transform:scaleX(1.010);transform-origin:right center;">RM1,470.00</span>
<span style="left:400.06px;top:276px;width:11.08px;line-height:14px;font-size:8.5px;font-weight:bold;color:#000;text-align:center;transform:scaleX(0.950);transform-origin:center center;">M</span>
<span style="left:442.64px;top:276px;width:8.73px;line-height:14px;font-size:8.5px;font-weight:bold;color:#000;text-align:center;transform:scaleX(1.080);transform-origin:center center;">4</span>
<span style="left:470.43px;top:276px;width:33.77px;line-height:14px;font-size:8.5px;font-weight:bold;color:#000;text-align:right;transform:scaleX(0.930);transform-origin:right center;">Class 4</span>
<span style="left:512.00px;top:276px;width:33.77px;line-height:14px;font-size:8.5px;font-weight:bold;color:#000;text-align:left;transform:scaleX(1.020);transform-origin:left center;">ST0012</span>
<span style="left:605.09px;top:276px;width:41.82px;line-height:14px;font-size:8.5px;font-weight:bold;color:#000;text-align:center;transform:scaleX(1.100);transform-origin:center center;">14/7/2015</span>
<span style="left:658.00px;top:276px;width:61.79px;line-height:14px;font-size:8.5px;font-weight:bold;color:#000;text-align:left;transform:scaleX(0.975);transform-origin:left center;">STANLEY YAP</span>
<div style="left:120px;top:302px;width:770px;height:1px;background:#eaecef;"></div>
<div style="left:111px;top:291px;width:9px;height:11px;background:linear-gradient(#fbfbfc,#eceef1);"></div>
<div style="left:111px;top:302px;width:9px;height:1px;background:#d5d8de;"></div>
<span style="left:122.00px;top:289px;width:51.86px;line-height:14px;font-size:8.5px;font-weight:bold;color:#000;text-align:left;transform:scaleX(0.975);transform-origin:left center;">SELVARANI</span>
<span style="left:341.08px;top:289px;width:43.22px;line-height:14px;font-size:8.5px;font-weight:bold;color:#000;text-align:right;transform:scaleX(1.010);transform-origin:right center;">RM600.00</span>
<span style="left:401.00px;top:289px;width:9.19px;line-height:14px;font-size:8.5px;font-weight:bold;color:#000;text-align:center;transform:scaleX(0.950);transform-origin:center center;">F</span>
<span style="left:442.64px;top:289px;width:8.73px;line-height:14px;font-size:8.5px;font-weight:bold;color:#000;text-align:center;transform:scaleX(1.080);transform-origin:center center;">3</span>
<span style="left:470.43px;top:289px;width:33.77px;line-height:14px;font-size:8.5px;font-weight:bold;color:#000;text-align:right;transform:scaleX(0.930);transform-origin:right center;">Class 3</span>
<span style="left:512.00px;top:289px;width:33.77px;line-height:14px;font-size:8.5px;font-weight:bold;color:#000;text-align:left;transform:scaleX(1.020);transform-origin:left center;">ST0014</span>
<span style="left:605.09px;top:289px;width:41.82px;line-height:14px;font-size:8.5px;font-weight:bold;color:#000;text-align:center;transform:scaleX(1.100);transform-origin:center center;">14/7/2015</span>
<span style="left:658.00px;top:289px;width:53.11px;line-height:14px;font-size:8.5px;font-weight:bold;color:#000;text-align:left;transform:scaleX(0.975);transform-origin:left center;">CHANDRAN</span>
<div style="left:120px;top:314px;width:770px;height:1px;background:#eaecef;"></div>
<div style="left:111px;top:303px;width:9px;height:11px;background:linear-gradient(#fbfbfc,#eceef1);"></div>
<div style="left:111px;top:314px;width:9px;height:1px;background:#d5d8de;"></div>
<span style="left:122.00px;top:301px;width:60.19px;line-height:14px;font-size:8.5px;font-weight:bold;color:#000;text-align:left;transform:scaleX(0.975);transform-origin:left center;">SUGUMARAN</span>
<span style="left:350.54px;top:301px;width:33.76px;line-height:14px;font-size:8.5px;font-weight:bold;color:#000;text-align:right;transform:scaleX(1.010);transform-origin:right center;">RM0.00</span>
<span style="left:400.06px;top:301px;width:11.08px;line-height:14px;font-size:8.5px;font-weight:bold;color:#000;text-align:center;transform:scaleX(0.950);transform-origin:center center;">M</span>
<span style="left:440.27px;top:301px;width:13.45px;line-height:14px;font-size:8.5px;font-weight:bold;color:#000;text-align:center;transform:scaleX(1.080);transform-origin:center center;">10</span>
<span style="left:470.43px;top:301px;width:33.77px;line-height:14px;font-size:8.5px;font-weight:bold;color:#000;text-align:right;transform:scaleX(0.930);transform-origin:right center;">Class 0</span>
<span style="left:512.00px;top:301px;width:33.77px;line-height:14px;font-size:8.5px;font-weight:bold;color:#000;text-align:left;transform:scaleX(1.020);transform-origin:left center;">ST0016</span>
<span style="left:607.46px;top:301px;width:37.09px;line-height:14px;font-size:8.5px;font-weight:bold;color:#000;text-align:center;transform:scaleX(1.100);transform-origin:center center;">6/9/2015</span>
<span style="left:658.00px;top:301px;width:51.22px;line-height:14px;font-size:8.5px;font-weight:bold;color:#000;text-align:left;transform:scaleX(0.975);transform-origin:left center;">MANICKAM</span>
<div style="left:851px;top:165px;width:38px;height:150px;overflow:hidden">
<span style="left:30.90px;top:12px;width:13.45px;line-height:14px;font-size:8.5px;font-weight:bold;color:#000;text-align:left;transform:scaleX(0.920);transform-origin:left center;">01</span>
<span style="left:36.20px;top:24px;width:8.73px;line-height:14px;font-size:8.5px;font-weight:bold;color:#000;text-align:left;transform:scaleX(0.920);transform-origin:left center;">0</span>
<span style="left:36.20px;top:37px;width:8.73px;line-height:14px;font-size:8.5px;font-weight:bold;color:#000;text-align:left;transform:scaleX(0.920);transform-origin:left center;">0</span>
<span style="left:36.20px;top:49px;width:8.73px;line-height:14px;font-size:8.5px;font-weight:bold;color:#000;text-align:left;transform:scaleX(0.920);transform-origin:left center;">0</span>
<span style="left:30.90px;top:62px;width:13.45px;line-height:14px;font-size:8.5px;font-weight:bold;color:#000;text-align:left;transform:scaleX(0.920);transform-origin:left center;">01</span>
<span style="left:36.20px;top:74px;width:8.73px;line-height:14px;font-size:8.5px;font-weight:bold;color:#000;text-align:left;transform:scaleX(0.920);transform-origin:left center;">0</span>
<span style="left:36.20px;top:87px;width:8.73px;line-height:14px;font-size:8.5px;font-weight:bold;color:#000;text-align:left;transform:scaleX(0.920);transform-origin:left center;">0</span>
<span style="left:36.20px;top:99px;width:8.73px;line-height:14px;font-size:8.5px;font-weight:bold;color:#000;text-align:left;transform:scaleX(0.920);transform-origin:left center;">0</span>
<span style="left:36.20px;top:111px;width:8.73px;line-height:14px;font-size:8.5px;font-weight:bold;color:#000;text-align:left;transform:scaleX(0.920);transform-origin:left center;">0</span>
<span style="left:36.20px;top:124px;width:8.73px;line-height:14px;font-size:8.5px;font-weight:bold;color:#000;text-align:left;transform:scaleX(0.920);transform-origin:left center;">0</span>
<span style="left:36.20px;top:136px;width:8.73px;line-height:14px;font-size:8.5px;font-weight:bold;color:#000;text-align:left;transform:scaleX(0.920);transform-origin:left center;">0</span>
</div>
<div style="left:120px;top:179px;width:1px;height:136px;background:#eceef1;"></div>
<div style="left:322px;top:179px;width:1px;height:136px;background:#eceef1;"></div>
<div style="left:386px;top:179px;width:1px;height:136px;background:#eceef1;"></div>
<div style="left:425px;top:179px;width:1px;height:136px;background:#eceef1;"></div>
<div style="left:471px;top:179px;width:1px;height:136px;background:#eceef1;"></div>
<div style="left:510px;top:179px;width:1px;height:136px;background:#eceef1;"></div>
<div style="left:596px;top:179px;width:1px;height:136px;background:#eceef1;"></div>
<div style="left:656px;top:179px;width:1px;height:136px;background:#eceef1;"></div>
<div style="left:850px;top:179px;width:1px;height:136px;background:#eceef1;"></div>
<div style="left:120px;top:165px;width:1px;height:150px;background:#d5d8de;"></div>
<svg style="left:113px;top:180px" width="6" height="8" viewBox="0 0 6 8"><path d="M0.6 0 L4.9 4 L0.6 8Z" fill="#000"/></svg>
<div style="left:111px;top:326px;width:779px;height:12px;background:#eeeeee;"></div>
<svg style="left:114px;top:329px" width="5" height="6" viewBox="0 0 5 6"><path d="M4 0.4 L0.8 3 L4 5.6Z" fill="#202020"/></svg>
<div style="left:124px;top:327px;width:10px;height:10px;background:linear-gradient(#f4f4f4,#e4e4e4 45%,#cfcfcf 55%,#c4c4c4);box-sizing:border-box;border:1px solid #b4b4b4;border-radius:1.5px"></div>
<div style="left:108px;top:347px;width:782px;height:16px;background:#a6caf0;"></div>
<div style="left:107px;top:363px;width:783px;height:1px;background:#8a8e98;"></div>
<span style="left:425.20px;top:348px;width:206.14px;line-height:15px;font-size:9.2px;font-weight:normal;color:#000080;text-align:left;transform:scaleX(1.031);transform-origin:left center;-webkit-text-stroke:.2px #000080;">Current Record : KESAVAN RAJ - Invoice No : 25</span>
<span style="left:107.50px;top:366px;width:72.01px;line-height:14px;font-size:8.5px;font-weight:bold;color:#000;text-align:left;transform:scaleX(0.963);transform-origin:left center;">Student Invoices</span>
<div style="left:107px;top:380px;width:783px;height:135px;background:#fff;box-sizing:border-box;border:1px solid #a4a8b0;border-top-color:#c4c8d0;border-right:none;border-bottom:none"></div>
<div style="left:108px;top:381px;width:782px;height:12px;background:linear-gradient(#ffffff,#f6f7f9 50%,#eceef2);"></div>
<div style="left:108px;top:393px;width:782px;height:1px;background:#d5d8de;"></div>
<div style="left:117px;top:381px;width:1px;height:37px;background:#e0e3e8;"></div>
<div style="left:162px;top:381px;width:1px;height:37px;background:#e0e3e8;"></div>
<div style="left:220px;top:381px;width:1px;height:37px;background:#e0e3e8;"></div>
<div style="left:734px;top:381px;width:1px;height:37px;background:#e0e3e8;"></div>
<div style="left:800px;top:381px;width:1px;height:37px;background:#e0e3e8;"></div>
<div style="left:872px;top:381px;width:1px;height:37px;background:#e0e3e8;"></div>
<span style="left:118.50px;top:380px;width:46.98px;line-height:14px;font-size:8.5px;font-weight:bold;color:#000;text-align:left;transform:scaleX(0.989);transform-origin:left center;">Invoice No</span>
<span style="left:164.50px;top:380px;width:22.42px;line-height:14px;font-size:8.5px;font-weight:bold;color:#000;text-align:left;transform:scaleX(1.004);transform-origin:left center;">Date</span>
<span style="left:451.42px;top:380px;width:50.76px;line-height:14px;font-size:8.5px;font-weight:bold;color:#000;text-align:center;transform:scaleX(0.962);transform-origin:center center;">Description</span>
<span style="left:762.40px;top:380px;width:36.10px;line-height:14px;font-size:8.5px;font-weight:bold;color:#000;text-align:right;transform:scaleX(0.919);transform-origin:right center;">Amount</span>
<span style="left:824.34px;top:380px;width:44.16px;line-height:14px;font-size:8.5px;font-weight:bold;color:#000;text-align:right;transform:scaleX(0.921);transform-origin:right center;">Payments</span>
<div style="left:117px;top:393px;width:773px;height:11px;background:#3399ff;transform:translateY(.6px);"></div>
<div style="left:108px;top:394px;width:9px;height:11px;background:linear-gradient(#fbfbfc,#eceef1);"></div>
<div style="left:108px;top:405px;width:9px;height:12px;background:linear-gradient(#fbfbfc,#eceef1);"></div>
<div style="left:108px;top:404px;width:9px;height:1px;background:#d5d8de;"></div>
<div style="left:108px;top:417px;width:9px;height:1px;background:#d5d8de;"></div>
<div style="left:117px;top:417px;width:773px;height:1px;background:#e4e6ea;"></div>
<div style="left:162px;top:393px;width:1px;height:11px;background:#7fbcff;transform:translateY(.6px);"></div>
<div style="left:220px;top:393px;width:1px;height:11px;background:#7fbcff;transform:translateY(.6px);"></div>
<div style="left:734px;top:393px;width:1px;height:11px;background:#7fbcff;transform:translateY(.6px);"></div>
<div style="left:800px;top:393px;width:1px;height:11px;background:#7fbcff;transform:translateY(.6px);"></div>
<div style="left:872px;top:393px;width:1px;height:11px;background:#7fbcff;transform:translateY(.6px);"></div>
<svg style="left:110px;top:395px" width="6" height="9" viewBox="0 0 6 9"><path d="M0.8 0.6 L5.2 4.4 L0.8 8.2Z" fill="#000"/></svg>
<span style="left:147.15px;top:392px;width:13.45px;line-height:14px;font-size:8.5px;font-weight:bold;color:#fff;text-align:right;transform:scaleX(0.950);transform-origin:right center;">25</span>
<span style="left:164.30px;top:392px;width:41.82px;line-height:14px;font-size:8.5px;font-weight:bold;color:#fff;text-align:left;transform:scaleX(1.100);transform-origin:left center;">10/9/2015</span>
<span style="left:222.00px;top:392px;width:117.38px;line-height:14px;font-size:8.5px;font-weight:bold;color:#fff;text-align:left;transform:scaleX(0.979);transform-origin:left center;white-space:pre;">Fees for  - September - 2015</span>
<span style="left:768.60px;top:392px;width:30.00px;line-height:14px;font-size:8.5px;font-weight:bold;color:#fff;text-align:right;transform:scaleX(1.040);transform-origin:right center;">770.00</span>
<span style="left:848.46px;top:392px;width:20.54px;line-height:14px;font-size:8.5px;font-weight:bold;color:#fff;text-align:right;transform:scaleX(1.050);transform-origin:right center;">0.00</span>
<span style="left:147.15px;top:404px;width:13.45px;line-height:14px;font-size:8.5px;font-weight:bold;color:#000;text-align:right;transform:scaleX(0.950);transform-origin:right center;">15</span>
<span style="left:164.30px;top:404px;width:41.82px;line-height:14px;font-size:8.5px;font-weight:bold;color:#000;text-align:left;transform:scaleX(1.100);transform-origin:left center;">15/7/2015</span>
<span style="left:222.00px;top:404px;width:102.40px;line-height:14px;font-size:8.5px;font-weight:bold;color:#000;text-align:left;transform:scaleX(0.986);transform-origin:left center;white-space:pre;">Fees for  - August - 2015</span>
<span style="left:768.60px;top:404px;width:30.00px;line-height:14px;font-size:8.5px;font-weight:bold;color:#000;text-align:right;transform:scaleX(1.040);transform-origin:right center;">520.00</span>
<span style="left:839.00px;top:404px;width:30.00px;line-height:14px;font-size:8.5px;font-weight:bold;color:#000;text-align:right;transform:scaleX(1.060);transform-origin:right center;">200.00</span>
<div style="left:889px;top:96px;width:1px;height:420px;background:#fff;"></div>
<div style="left:890px;top:95px;width:1px;height:422px;background:#989ca8;"></div>
<div style="left:891px;top:81px;width:1px;height:436px;background:#f6f6f6;"></div>
<div style="left:10px;top:517px;width:882px;height:16px;background:#f0edeb;"></div>
<div style="left:10px;top:517px;width:882px;height:1px;background:#fafafa;"></div>
<span style="left:15.50px;top:520px;width:97.71px;line-height:13px;font-size:8.4px;font-weight:normal;color:#28143c;text-align:left;transform:scaleX(0.966);transform-origin:left center;">Licensed To : Good Child</span>
<div style="left:10px;top:533px;width:882px;height:2px;background:#bcd4ee;"></div>
<div style="left:308px;top:533px;width:39px;height:2px;background:#f4f4f4;"></div>
<div style="left:351px;top:533px;width:39px;height:2px;background:#f4f4f4;"></div>
<div style="left:882px;top:533px;width:10px;height:2px;background:#d0d0d0;"></div>
</div></body></html>
